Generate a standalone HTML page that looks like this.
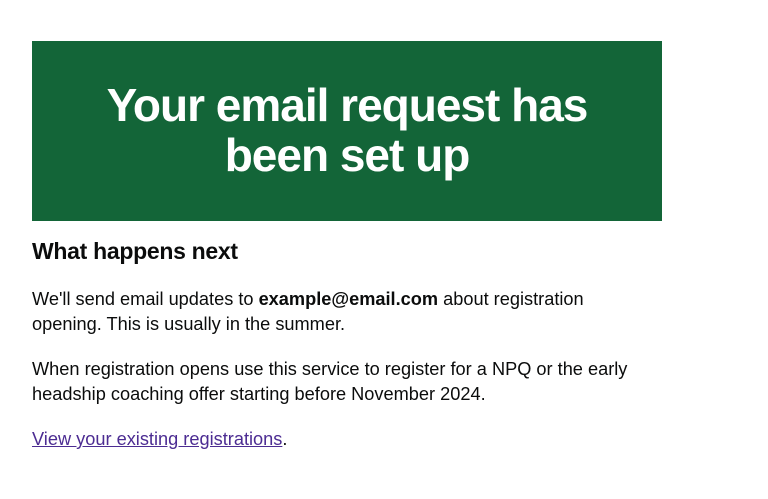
<!DOCTYPE html>
<html><head><meta charset="utf-8"><style>
body{margin:0;background:#fff;font-family:"Liberation Sans",Arial,sans-serif;color:#0b0c0c;}
.panel{position:absolute;left:32px;top:41px;width:630px;height:180px;background:#136538;color:#fff;text-align:center;}
.panel h1{margin:0;position:absolute;left:0;right:0;top:39px;font-size:46px;line-height:50px;font-weight:bold;letter-spacing:-1px;}
h2{position:absolute;left:32px;top:236px;margin:0;font-size:23px;line-height:30px;font-weight:bold;letter-spacing:-0.3px;}
p{position:absolute;left:32px;margin:0;font-size:18.2px;line-height:25px;width:660px;}
a{color:#4c2c92;text-decoration:underline;}
</style></head><body>
<div class="panel"><h1>Your email request has<br>been set up</h1></div>
<h2>What happens next</h2>
<p style="top:287px">We'll send email updates to <b>example@email.com</b> about registration<br>opening. This is usually in the summer.</p>
<p style="top:357px">When registration opens use this service to register for a NPQ or the early<br>headship coaching offer starting before November 2024.</p>
<p style="top:427px"><a href="#">View your existing registrations</a>.</p>
</body></html>
